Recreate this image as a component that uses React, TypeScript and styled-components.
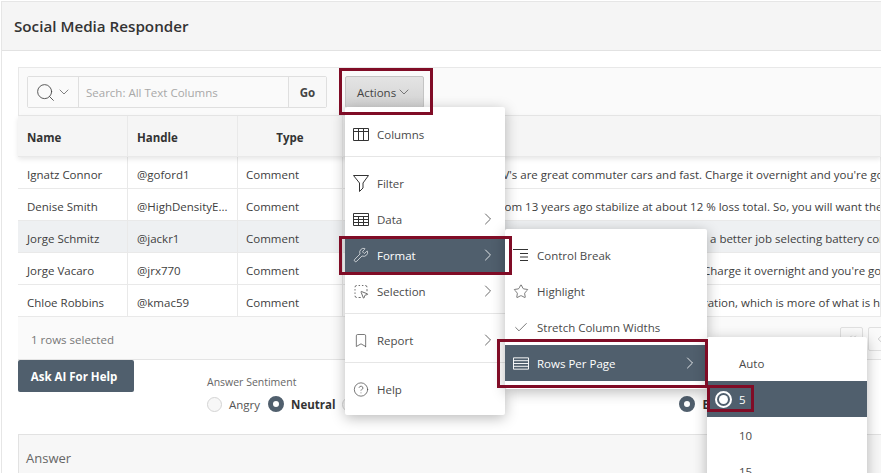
import styled, { createGlobalStyle } from 'styled-components';
import {
  Search, ChevronDown, ChevronRight, ChevronLeft, ChevronsLeft, Wrench, SquareDashedMousePointer,
  Bookmark, CircleHelp, Star, Check,
} from 'lucide-react';

const Global = createGlobalStyle`
html, body { margin: 0; padding: 0; background: #fff; }
body { font-family: "Open Sans", "Noto Sans", sans-serif; color: #404040; }
`;
const Page = styled.div`
position: relative;
width: 881px;
height: 473px;
overflow: hidden;
padding: 1px 0 0 1px;
box-sizing: border-box;
`;
const Region = styled.div`
border-left: 1px solid #e6e6e6;
border-top: 1px solid #e6e6e6;
`;
const TitleBar = styled.div`
height: 49px;
display: flex;
align-items: center;
padding-left: 12px;
box-sizing: border-box;
background: #f5f5f5;
border-bottom: 1px solid #e2e2e2;
`;
const Title = styled.h1`
margin: 0;
font-size: 15.2px;
font-weight: 600;
color: #333;
`;
const Body = styled.div`
padding: 16px 0 0 16px;
`;
const Toolbar = styled.div`
display: flex;
height: 49px;
box-sizing: border-box;
padding: 8px 0 0 8px;
background: #fafafa;
border: 1px solid #e8e8e8;
border-right: none;
`;
const SearchBar = styled.div`
display: flex;
height: 32px;
width: 300px;
box-sizing: border-box;
border: 1px solid #dfdfdf;
border-radius: 2px;
background: #fff;
`;
const SearchButton = styled.div`
width: 50px;
display: flex;
align-items: center;
justify-content: center;
background: #fafafa;
border-right: 1px solid #dfdfdf;
color: #444;
`;
const SearchInput = styled.div`
flex: 1;
display: flex;
align-items: center;
padding-left: 7px;
font-size: 11.5px;
color: #a8a8a8;
background: #fafafa;
`;
const GoButton = styled.div`
width: 38px;
display: flex;
align-items: center;
justify-content: center;
box-sizing: border-box;
border-left: 1px solid #dfdfdf;
font-size: 11.5px;
font-weight: 700;
color: #444;
background: #f8f8f8;
`;
const ActionsButton = styled.div`
display: flex;
align-items: center;
justify-content: center;
margin-left: 18px;
width: 79px;
height: 32px;
box-sizing: border-box;
border: 1px solid #c4c4c4;
border-radius: 2px;
background: linear-gradient(#e4e4e4, #d2d2d2);
font-size: 11.5px;
color: #444;
`;
const GridRow = styled.div<{ $head?: boolean; $selected?: boolean }>`
display: grid;
grid-template-columns: 110px 110px 105px 1fr;
height: ${(p) => (p.$head ? '41px' : '32px')};
box-sizing: border-box;
background: ${(p) => (p.$head ? '#f5f5f5' : p.$selected ? '#eef0f2' : '#fff')};
border-bottom: 1px solid #e9e9e9;
box-shadow: ${(p) => (p.$head ? '0 2px 5px rgba(0,0,0,.1)' : 'none')};
position: ${(p) => (p.$head ? 'relative' : 'static')};
font-size: 11.5px;
white-space: nowrap;
`;
const Cell = styled.div<{ $head?: boolean; $center?: boolean; $lead?: number }>`
display: flex;
align-items: center;
justify-content: ${(p) => (p.$center ? 'center' : 'flex-start')};
padding-left: ${(p) => p.$lead ?? 9}px;
padding-top: 3px;
border-right: 1px solid #e9e9e9;
overflow: hidden;
font-weight: ${(p) => (p.$head ? 700 : 400)};
color: ${(p) => (p.$head ? '#333' : '#404040')};
`;
const GridFooter = styled.div`
height: 43px;
display: flex;
align-items: center;
justify-content: space-between;
box-sizing: border-box;
padding: 2px 0 0 13px;
background: #fafafa;
border-bottom: 1px solid #e4e4e4;
font-size: 11.5px;
color: #777;
`;
const Pager = styled.div`
display: flex;
flex: none;
gap: 5px;
align-self: flex-start;
margin: 8px -10px 0 0;
`;
const PagerButton = styled.div`
width: 23px;
height: 24px;
display: flex;
align-items: center;
justify-content: center;
box-sizing: border-box;
border: 1px solid #e0e0e0;
border-radius: 2px;
color: #aaa;
`;
const FormRow = styled.div`
display: flex;
align-items: flex-start;
height: 74px;
`;
const AskButton = styled.div`
width: 116px;
height: 32px;
display: flex;
align-items: center;
justify-content: center;
padding-right: 4px;
box-sizing: border-box;
background: #505f6d;
border-radius: 2px;
color: #fff;
font-size: 11.5px;
font-weight: 700;
`;
const Field = styled.div`
margin: 15px 0 0 73px;
`;
const FieldLabel = styled.div`
font-size: 10.5px;
color: #666;
height: 16px;
`;
const RadioGroup = styled.div`
display: flex;
align-items: center;
margin-top: 5px;
height: 16px;
font-size: 11.5px;
`;
const Radio = styled.span<{ $on?: boolean; $gap?: number }>`
display: inline-block;
flex: none;
width: ${(p) => (p.$on ? 16 : 15)}px;
height: ${(p) => (p.$on ? 16 : 15)}px;
box-sizing: border-box;
border-radius: 50%;
margin-left: ${(p) => p.$gap ?? 0}px;
border: ${(p) => (p.$on ? '5px solid #505f6d' : '1px solid #d4d4d4')};
background: ${(p) => (p.$on ? '#fff' : '#f7f7f7')};
`;
const RadioText = styled.span<{ $on?: boolean }>`
margin-left: 7px;
font-weight: ${(p) => (p.$on ? 700 : 400)};
color: ${(p) => (p.$on ? '#333' : '#555')};
`;
const AnswerPanel = styled.div`
height: 60px;
box-sizing: border-box;
padding: 14px 0 0 7px;
background: #f7f7f7;
border: 1px solid #e2e2e2;
border-right: none;
font-size: 13px;
color: #666;
`;
const Menu = styled.div<{ $x: number; $y: number; $w: number; $top?: number }>`
position: absolute;
left: ${(p) => p.$x}px;
top: ${(p) => p.$y}px;
width: ${(p) => p.$w}px;
box-sizing: border-box;
padding: ${(p) => p.$top ?? 8}px 0 8px;
background: #fff;
border-radius: 2px;
box-shadow: 0 3px 14px rgba(0,0,0,.28);
font-size: 11.5px;
color: #4a4a4a;
`;
const MenuItem = styled.div<{ $active?: boolean; $pad?: number }>`
display: flex;
align-items: center;
height: 36px;
padding: 0 7px 0 ${(p) => p.$pad ?? 8}px;
background: ${(p) => (p.$active ? '#505f6d' : 'transparent')};
color: ${(p) => (p.$active ? '#fff' : 'inherit')};
`;
const IconSlot = styled.span`
display: flex;
width: 16px;
justify-content: center;
margin-right: 8px;
flex: none;
`;
const ItemLabel = styled.span`
flex: 1;
`;
const Separator = styled.div`
height: 1px;
margin: 4px 0 8px;
background: #e6e6e6;
`;
const Callout = styled.div<{ $x: number; $y: number; $w: number; $h: number }>`
position: absolute;
left: ${(p) => p.$x}px;
top: ${(p) => p.$y}px;
width: ${(p) => p.$w}px;
height: ${(p) => p.$h}px;
box-sizing: border-box;
border: 3px solid #800c26;
pointer-events: none;
`;
const SelectedMark = styled.span`
display: block;
width: 17px;
height: 17px;
box-sizing: border-box;
border: 2px solid #fff;
border-radius: 50%;
padding: 2px;
&::after {
  content: '';
  display: block;
  width: 9px;
  height: 9px;
  border-radius: 50%;
  background: #fff;
}
`;

const ColumnsIcon = () => (
  <svg width="16" height="13" viewBox="0 0 16 13" fill="none" stroke="#333">
    <path d="M.5.5h15v12H.5zM.5 3.5h15M5.5.5v12M10.5.5v12" />
  </svg>
);
const DataIcon = () => (
  <svg width="16" height="13" viewBox="0 0 16 13" fill="none" stroke="#333">
    <path d="M.5.5h15v12H.5zM.5 3.5h15M.5 6.5h15M.5 9.5h15M5.5 3.5v9M10.5 3.5v9" />
  </svg>
);
const FunnelIcon = () => (
  <svg width="16" height="17" viewBox="0 0 16 17" fill="none" stroke="#333">
    <path d="M.5.5h15L10 8v5l-3.500 3.500V8z" />
  </svg>
);
const BreakIcon = () => (
  <svg width="16" height="12" viewBox="0 0 16 12" fill="none" stroke="#333">
    <path d="M0 .5h15M7 4.500h8M7 8h8M7 11.500h8" />
  </svg>
);
const RowsIcon = () => (
  <svg width="17" height="13" viewBox="0 0 17 13" fill="none" stroke="currentColor">
    <path d="M.5.5h16v12H.5zM.5 3.500h16M.5 6.500h16M.5 9.500h16" />
  </svg>
);

const rows = [
  { name: 'Ignatz Connor', handle: '@goford1', text: "EV's are great commuter cars and fast. Charge it overnight and you're good to go", lead: 153 },
  { name: 'Denise Smith', handle: '@HighDensityE...', text: 'from 13 years ago stabilize at about 12 % loss total. So, you will want the', lead: 153 },
  { name: 'Jorge Schmitz', handle: '@jackr1', text: 'a better job selecting battery cor', lead: 367, selected: true },
  { name: 'Jorge Vacaro', handle: '@jrx770', text: "Charge it overnight and you're good to go", lead: 360 },
  { name: 'Chloe Robbins', handle: '@kmac59', text: 'ration, which is more of what is happening', lead: 360 },
];

const Arrow = () => <ChevronRight size={20} strokeWidth={1} />;

const App = () => {
  return (
    <Page>
      <Global />
      <Region>
        <TitleBar><Title>Social Media Responder</Title></TitleBar>
        <Body>
          <Toolbar>
            <SearchBar>
              <SearchButton>
                <Search size={21} strokeWidth={1} />
                <ChevronDown size={16} strokeWidth={1} />
              </SearchButton>
              <SearchInput>Search: All Text Columns</SearchInput>
              <GoButton>Go</GoButton>
            </SearchBar>
            <ActionsButton>Actions <ChevronDown size={16} strokeWidth={1} /></ActionsButton>
          </Toolbar>
          <GridRow $head>
            <Cell $head>Name</Cell>
            <Cell $head>Handle</Cell>
            <Cell $head $center $lead={0}>Type</Cell>
            <Cell $head />
          </GridRow>
          {rows.map((r) => (
            <GridRow key={r.name} $selected={r.selected}>
              <Cell>{r.name}</Cell>
              <Cell>{r.handle}</Cell>
              <Cell $lead={8}>Comment</Cell>
              <Cell $lead={r.lead}>{r.text}</Cell>
            </GridRow>
          ))}
          <GridFooter>
            1 rows selected
            <Pager>
              <PagerButton><ChevronsLeft size={14} strokeWidth={1} /></PagerButton>
              <PagerButton><ChevronLeft size={14} strokeWidth={1} /></PagerButton>
            </Pager>
          </GridFooter>
          <FormRow>
            <AskButton>Ask AI For Help</AskButton>
            <Field>
              <FieldLabel>Answer Sentiment</FieldLabel>
              <RadioGroup>
                <Radio />
                <RadioText>Angry</RadioText>
                <Radio $on $gap={8} />
                <RadioText $on>Neutral</RadioText>
                <Radio $gap={7} />
                <Radio $on $gap={322} />
                <RadioText $on>English</RadioText>
              </RadioGroup>
            </Field>
          </FormRow>
          <AnswerPanel>Answer</AnswerPanel>
        </Body>
      </Region>

      <Menu $x={345} $y={107} $w={160} $top={9}>
        <MenuItem><IconSlot><ColumnsIcon /></IconSlot><ItemLabel>Columns</ItemLabel></MenuItem>
        <Separator />
        <MenuItem><IconSlot><FunnelIcon /></IconSlot><ItemLabel>Filter</ItemLabel></MenuItem>
        <MenuItem><IconSlot><DataIcon /></IconSlot><ItemLabel>Data</ItemLabel><Arrow /></MenuItem>
        <MenuItem $active><IconSlot><Wrench size={18} strokeWidth={1} /></IconSlot><ItemLabel>Format</ItemLabel><Arrow /></MenuItem>
        <MenuItem><IconSlot><SquareDashedMousePointer size={17} strokeWidth={1.2} /></IconSlot><ItemLabel>Selection</ItemLabel><Arrow /></MenuItem>
        <Separator />
        <MenuItem><IconSlot><Bookmark size={19} strokeWidth={1.1} /></IconSlot><ItemLabel>Report</ItemLabel><Arrow /></MenuItem>
        <Separator />
        <MenuItem><IconSlot><CircleHelp size={19} strokeWidth={1.1} /></IconSlot><ItemLabel>Help</ItemLabel></MenuItem>
      </Menu>

      <Menu $x={505} $y={229} $w={202}>
        <MenuItem><IconSlot><BreakIcon /></IconSlot><ItemLabel>Control Break</ItemLabel></MenuItem>
        <MenuItem><IconSlot><Star size={19} strokeWidth={1.1} /></IconSlot><ItemLabel>Highlight</ItemLabel></MenuItem>
        <MenuItem><IconSlot><Check size={19} strokeWidth={1.1} /></IconSlot><ItemLabel>Stretch Column Widths</ItemLabel></MenuItem>
        <MenuItem $active><IconSlot><RowsIcon /></IconSlot><ItemLabel>Rows Per Page</ItemLabel><Arrow /></MenuItem>
      </Menu>

      <Menu $x={707} $y={337} $w={160}>
        <MenuItem $pad={8}><IconSlot /><ItemLabel>Auto</ItemLabel></MenuItem>
        <MenuItem $active $pad={8}><IconSlot><SelectedMark /></IconSlot><ItemLabel>5</ItemLabel></MenuItem>
        <MenuItem $pad={8}><IconSlot /><ItemLabel>10</ItemLabel></MenuItem>
        <MenuItem $pad={8}><IconSlot /><ItemLabel>15</ItemLabel></MenuItem>
      </Menu>

      <Callout $x={339} $y={68} $w={94} $h={47} />
      <Callout $x={339} $y={236} $w={173} $h={39} />
      <Callout $x={497} $y={339} $w={211} $h={49} />
      <Callout $x={707} $y={385} $w={47} $h={27} />
    </Page>
  )
}

export default App
